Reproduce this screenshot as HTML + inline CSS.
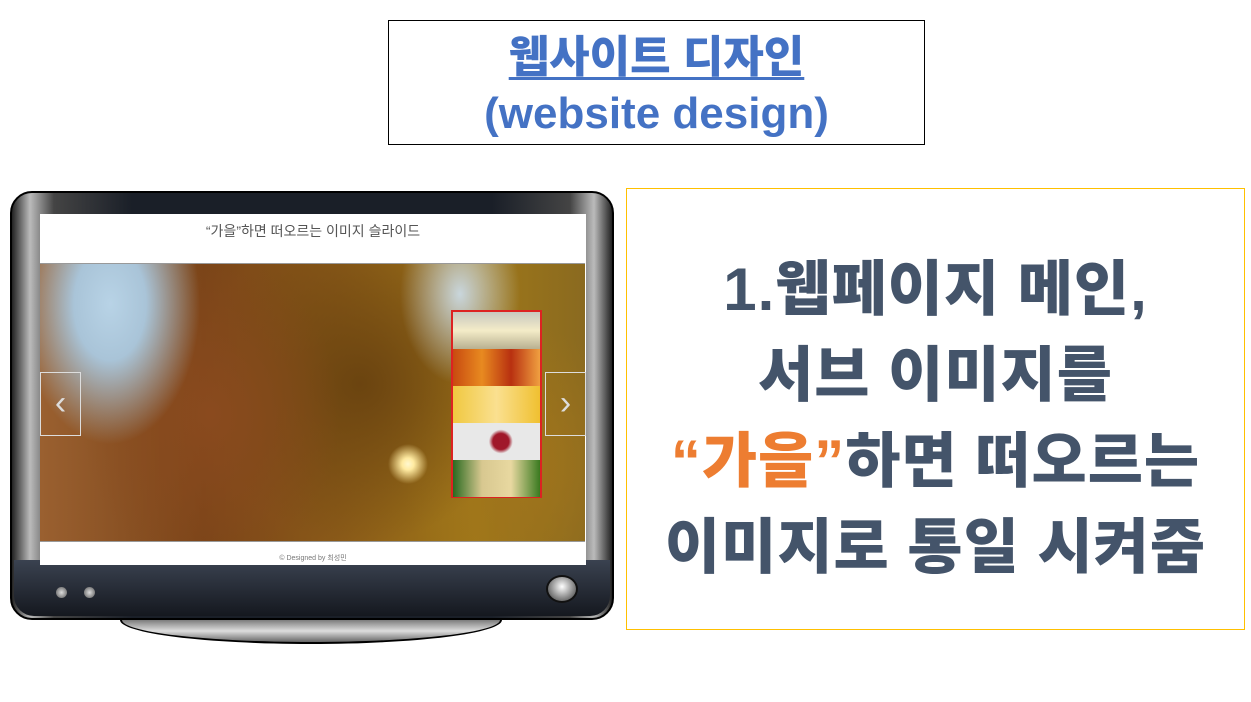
<!DOCTYPE html>
<html><head><meta charset="utf-8"><style>
*{margin:0;padding:0;box-sizing:border-box}
body{width:1251px;height:702px;background:#fff;position:relative;overflow:hidden;font-family:"Liberation Sans","Noto Sans CJK KR",sans-serif}
.abs{position:absolute}
#title{left:388px;top:20px;width:537px;height:125px;border:1px solid #000;text-align:center;color:#4472c4;font-weight:900;font-size:44px;line-height:56px;padding-top:9px}
#title u{text-decoration-thickness:3px;text-underline-offset:5px}
#right{left:626px;top:188px;width:619px;height:442px;border:1px solid #ffc000;text-align:center;color:#44546a;font-weight:900;font-size:60px;line-height:86px;padding-top:58px;letter-spacing:1px;white-space:nowrap}
#right .o{color:#ed7d31}
#stand{left:120px;top:596px;width:382px;height:48px;border-radius:50%;background:linear-gradient(#111 0%,#555 40%,#ddd 75%,#666 100%);border:2px solid #000}
#mon{left:10px;top:191px;width:604px;height:429px;border-radius:22px;background:linear-gradient(90deg,#222 0%,#bbb 3%,#444 7%,#1a1f28 20%,#1a1f28 80%,#444 93%,#bbb 97%,#222 100%);border:2px solid #000}
#monb{left:14px;top:560px;width:596px;height:56px;border-radius:0 0 20px 20px;background:linear-gradient(#3a4250,#15181f)}
#screen{left:40px;top:214px;width:546px;height:351px;background:#fff}
#photo{left:40px;top:263px;width:545px;height:279px;background:
radial-gradient(circle at 368px 200px,#fff8d0 0,#ffeaa0 6px,transparent 20px),
radial-gradient(ellipse 90px 140px at 70px 40px,#b8d3e6 0,#a9c4d8 40%,transparent 100%),
radial-gradient(ellipse 60px 90px at 420px 30px,#c9d6dc 0,transparent 100%),
radial-gradient(ellipse 130px 160px at 170px 150px,#8a4a1e 0,transparent 100%),
radial-gradient(ellipse 160px 160px at 320px 120px,#6b4410 0,transparent 100%),
radial-gradient(ellipse 120px 140px at 480px 200px,#a0741c 0,transparent 100%),
linear-gradient(90deg,#9a6030,#7a4418 30%,#8a5a18 55%,#a07818 80%,#8a6a20);border-top:1px solid #999;border-bottom:1px solid #999}
.arr{top:372px;width:41px;height:64px;border:1px solid #ddd;color:#ddd;font-size:34px;line-height:60px;text-align:center;font-weight:100}
#thumbs{left:451px;top:310px;width:91px;height:188px;border:2px solid #d22}
#thumbs div{height:37px}
</style></head><body>
<div id="title" class="abs"><u>웹사이트 디자인</u><br>(website design)</div>
<div id="right" class="abs">1.웹페이지 메인,<br>서브 이미지를<br><span class="o">“가을”</span>하면 떠오르는<br>이미지로 통일 시켜줌</div>
<div id="stand" class="abs"></div>
<div id="mon" class="abs"></div>
<div id="monb" class="abs"></div>
<div class="abs" style="left:56px;top:587px;width:11px;height:11px;border-radius:50%;background:radial-gradient(#ddd,#555)"></div>
<div class="abs" style="left:84px;top:587px;width:11px;height:11px;border-radius:50%;background:radial-gradient(#ddd,#555)"></div>
<div class="abs" style="left:546px;top:575px;width:32px;height:28px;border-radius:50%;background:radial-gradient(circle at 50% 40%,#fff,#999 50%,#333);border:2px solid #111"></div>
<div id="screen" class="abs"></div>
<div class="abs" style="left:40px;top:221px;width:546px;text-align:center;font-size:14px;color:#555">“가을”하면 떠오르는 이미지 슬라이드</div>
<div id="photo" class="abs"></div>
<div class="abs arr" style="left:40px">‹</div>
<div class="abs arr" style="left:545px">›</div>
<div id="thumbs" class="abs">
<div style="background:linear-gradient(#c8c8c0,#f4ecc8 50%,#b8b090)"></div>
<div style="background:linear-gradient(90deg,#c84a10,#e88a20,#b83010,#f0a040)"></div>
<div style="background:linear-gradient(90deg,#f0c840,#fae090,#f0c030)"></div>
<div style="background:radial-gradient(circle at 55% 50%,#a0182a 0,#a0182a 8px,#e8e8e8 12px)"></div>
<div style="background:linear-gradient(90deg,#2a6a20,#d8c890,#e8d8a0,#3a7a20)"></div>
</div>
<div class="abs" style="left:40px;top:553px;width:546px;text-align:center;font-size:7px;color:#777">© Designed by 최성민</div>
</body></html>
